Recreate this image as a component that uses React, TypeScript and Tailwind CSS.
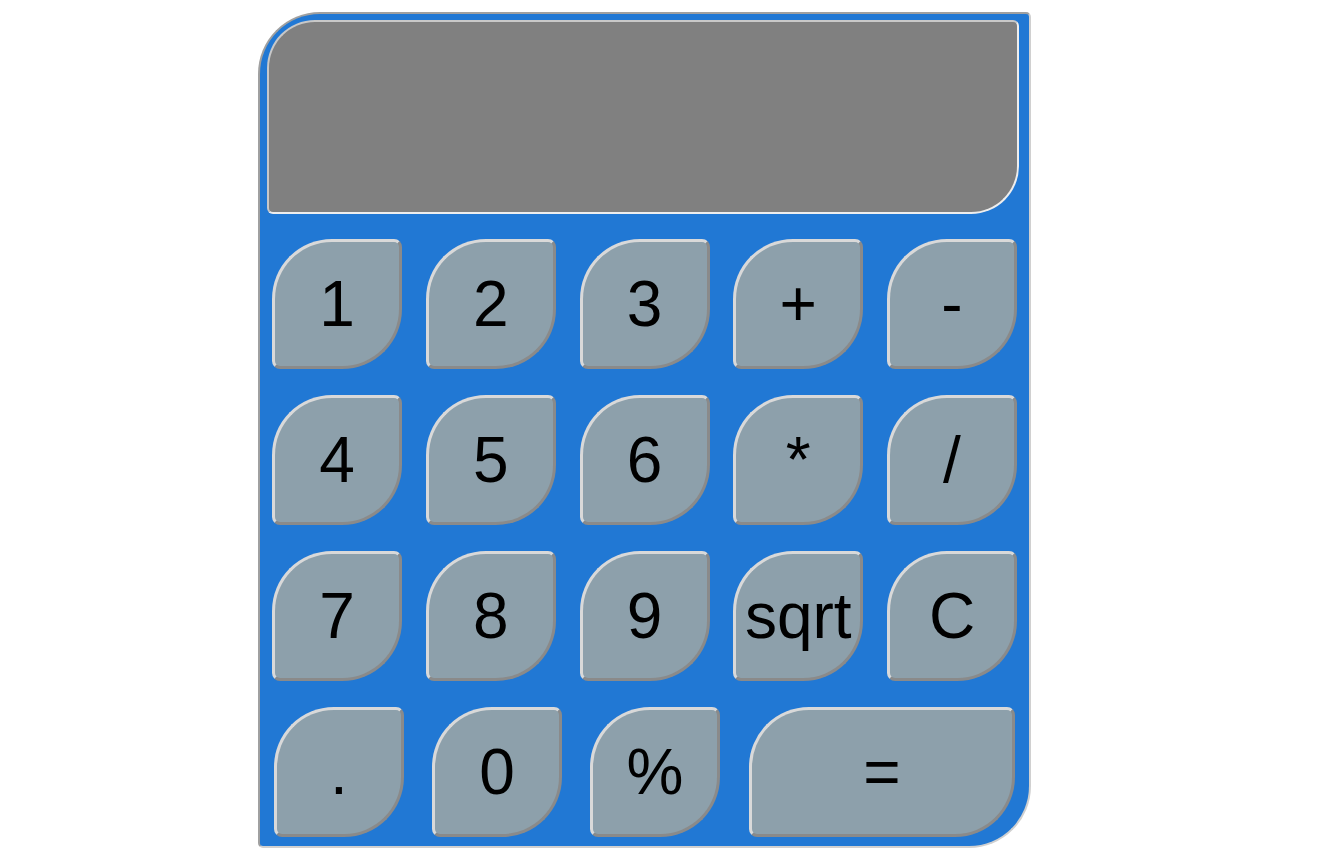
import React from "react";

const rows = [
  ["1", "2", "3", "+", "-"],
  ["4", "5", "6", "*", "/"],
  ["7", "8", "9", "sqrt", "C"],
];

function Key({ label, wide }: { label: string; wide?: boolean }) {
  return (
    <button
      className={
        "flex h-[130px] items-center justify-center rounded-tl-[60px] rounded-br-[60px] rounded-tr-[8px] rounded-bl-[8px] border-[3px] border-t-[#d9d9d9] border-l-[#d9d9d9] border-b-[#8a8a8a] border-r-[#8a8a8a] bg-[#8da0ab] p-0 text-[64px] leading-none text-black " +
        (wide ? "w-[266px]" : "w-[130px]")
      }
      style={{ fontFamily: '"Liberation Sans", Arial, sans-serif' }}
    >
      {label}
    </button>
  );
}

export default function App() {
  return (
    <div className="min-h-[863px] w-full bg-white pt-[12px] pl-[258px]">
      <div className="w-[773px] h-[836px] rounded-tl-[62px] rounded-br-[62px] rounded-tr-[5px] rounded-bl-[5px] border-2 border-t-[#a0a0a0] border-l-[#a0a0a0] border-b-[#d0d0d0] border-r-[#d0d0d0] bg-[#2178d4] pt-[6px] pl-[7px]">
        <div className="h-[194px] w-[752px] rounded-tl-[48px] rounded-br-[48px] rounded-tr-[6px] rounded-bl-[6px] border-2 border-t-[#c8c8c8] border-l-[#c8c8c8] border-b-[#eeeeee] border-r-[#eeeeee] bg-[#808080]" />
        <div className="mt-[25px] flex flex-col gap-[26px] pl-[5px]">
          {rows.map((r, i) => (
            <div key={i} className="flex gap-[23.75px]">
              {r.map((k) => (
                <Key key={k} label={k} />
              ))}
            </div>
          ))}
          <div className="flex gap-[28px] pl-[2px]">
            <Key label="." />
            <Key label="0" />
            <Key label="%" />
            <div className="pl-[1px]">
              <Key label="=" wide />
            </div>
          </div>
        </div>
      </div>
    </div>
  );
}
